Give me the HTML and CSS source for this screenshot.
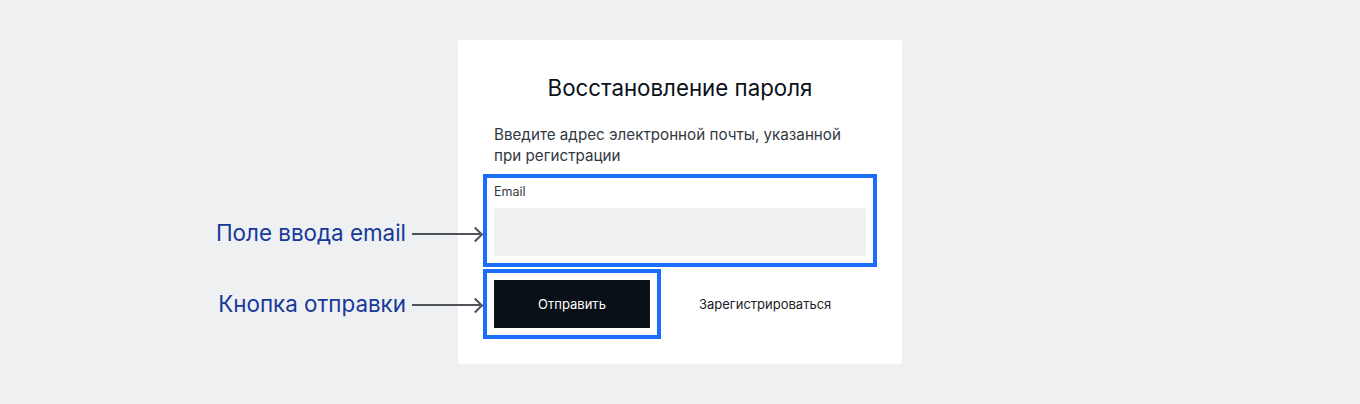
FILE: index.html
```html
<!DOCTYPE html>
<html lang="ru">

<head>
   <meta charset="UTF-8">
   <meta name="viewport" content="width=device-width, initial-scale=1.0">
   <title>Восстановление пароля</title>
   <link rel="stylesheet" href="styles.css">
</head>

<body>
   <div class="card">
      <h1 class="card-title">Восстановление пароля</h1>
      <p class="card-text">Введите адрес электронной почты, указанной при регистрации</p>

      <div class="field marked">
         <span class="callout">Поле ввода email</span>
         <label class="field-label" for="email">Email</label>
         <input id="email" class="field-input" type="email">
      </div>

      <div class="actions">
         <button class="submit-btn marked">
            <span class="callout">Кнопка отправки</span>
            Отправить
         </button>
         <a href="#" class="register-link">Зарегистрироваться</a>
      </div>
   </div>
</body>

</html>
```

FILE: styles.css
```css
* {
   margin: 0;
   padding: 0;
   box-sizing: border-box;
   font-family: Inter, 'Noto Sans', sans-serif;
}

body {
   background: #eff0f2;
   width: 1360px;
   height: 404px;
   padding-top: 40px;
   display: flex;
   justify-content: center;
   align-items: flex-start;
}

.card {
   width: 444px;
   background: #fff;
   border-radius: 2px;
   padding: 36px;
}

.card-title {
   font-size: 22.3px;
   line-height: 24px;
   font-weight: 400;
   color: #0b1117;
   text-align: center;
}

.card-text {
   margin-top: 24px;
   max-width: 360px;
   font-size: 15.2px;
   line-height: 21px;
   color: #33393f;
}

/* синие рамки-выделения */
.marked {
   position: relative;
   outline: 4px solid #1b6dfc;
   outline-offset: 7px;
}

.callout {
   position: absolute;
   right: 100%;
   top: 50%;
   margin-right: 88px;
   transform: translateY(-50%);
   font-size: 22.4px;
   line-height: 28px;
   color: #17399a;
   white-space: nowrap;
}

.callout::after {
   content: '';
   position: absolute;
   left: 100%;
   top: 50%;
   width: 68px;
   height: 2px;
   margin-left: 6px;
   background: #50545a;
}

.callout::before {
   content: '';
   position: absolute;
   left: 100%;
   top: 50%;
   width: 9px;
   height: 9px;
   margin-left: 64px;
   margin-top: -4.5px;
   border-top: 2px solid #50545a;
   border-right: 2px solid #50545a;
   transform: rotate(45deg);
}

.field {
   margin-top: 19px;
   display: flex;
   flex-direction: column;
}

.field .callout {
   top: 48px;
}

.field-label {
   font-size: 12.5px;
   line-height: 13px;
   color: #33393f;
   margin-bottom: 10px;
}

.field-input {
   height: 48px;
   border: none;
   border-radius: 2px;
   background: #eff0f2;
}

.actions {
   margin-top: 24px;
   display: flex;
   align-items: center;
}

.submit-btn {
   width: 156px;
   height: 48px;
   border: none;
   background: #0a1018;
   color: #fff;
   font-size: 13px;
}

.register-link {
   margin-left: 49px;
   font-size: 13px;
   color: #1c2228;
   text-decoration: none;
}
```
